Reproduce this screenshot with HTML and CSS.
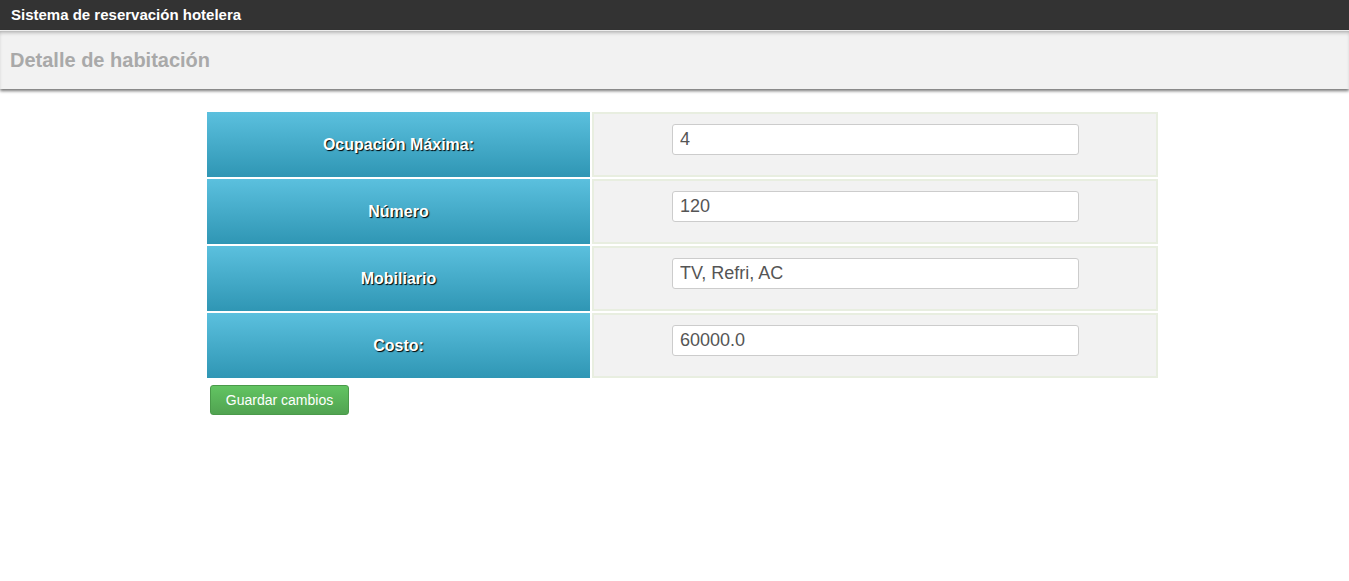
FILE: index.html
```html
<!DOCTYPE html>
<html lang="es">
<head>
<meta charset="utf-8">
<title>Detalle de habitación</title>
<link rel="stylesheet" href="styles.css">
</head>
<body>
<div class="topbar">Sistema de reservación hotelera</div>
<div class="subheader"><h1 class="title">Detalle de habitación</h1></div>
<main class="content">
  <form class="form">
    <table class="detail">
      <tr>
        <th class="label">Ocupación Máxima:</th>
        <td class="field"><input class="input" type="text" value="4"></td>
      </tr>
      <tr>
        <th class="label">Número</th>
        <td class="field"><input class="input" type="text" value="120"></td>
      </tr>
      <tr>
        <th class="label">Mobiliario</th>
        <td class="field"><input class="input" type="text" value="TV, Refri, AC"></td>
      </tr>
      <tr>
        <th class="label">Costo:</th>
        <td class="field"><input class="input" type="text" value="60000.0"></td>
      </tr>
    </table>
    <button class="btn-success" type="button">Guardar cambios</button>
  </form>
</main>
</body>
</html>
```
FILE: styles.css
```css
html, body {
  margin: 0;
  padding: 0;
  background: #fff;
  font-family: "Liberation Sans", Arial, sans-serif;
}
.topbar {
  height: 30px;
  line-height: 30px;
  background: #333333;
  color: #fff;
  font-weight: bold;
  font-size: 15px;
  padding-left: 11px;
  border-bottom: 1px solid #f4f4f4;
}
.subheader {
  height: 58px;
  background: #f2f2f2;
  box-shadow: inset 0 3px 4px -2px rgba(0,0,0,0.35), 0 2px 3px rgba(0,0,0,0.55);
  display: flex;
  align-items: center;
  padding-left: 10px;
  position: relative;
}
.title {
  margin: 0;
  font-size: 20px;
  font-weight: bold;
  color: #a9a9a9;
}
.content {
  padding: 21px 0 0 205px;
}
.form {
  margin: 0;
}
.detail {
  border-collapse: separate;
  border-spacing: 2px;
  width: 955px;
}
.label {
  width: 383px;
  height: 65px;
  padding: 0;
  background: linear-gradient(to bottom, #5bc0de, #2f96b4);
  color: #fff;
  font-size: 16px;
  font-weight: bold;
  text-shadow: 1px 1px 1px #000;
  text-align: center;
  vertical-align: middle;
}
.field {
  height: 61px;
  padding: 0;
  background: #f2f2f2;
  border: 2px solid #e8eee0;
  vertical-align: top;
}
.input {
  display: block;
  box-sizing: border-box;
  width: 407px;
  height: 31px;
  margin: 10px 0 0 78px;
  padding: 0 7px;
  border: 1px solid #cccccc;
  border-radius: 3px;
  background: #fff;
  font-family: "Liberation Sans", Arial, sans-serif;
  font-size: 18px;
  color: #555;
  outline: none;
}
.btn-success {
  display: block;
  margin: 5px 0 0 5px;
  width: 139px;
  height: 30px;
  padding: 0;
  border: 1px solid #4a9a4a;
  border-radius: 3px;
  background: linear-gradient(to bottom, #62c462, #51a351);
  color: #fff;
  font-family: "Liberation Sans", Arial, sans-serif;
  font-size: 14px;
  cursor: pointer;
}
```
